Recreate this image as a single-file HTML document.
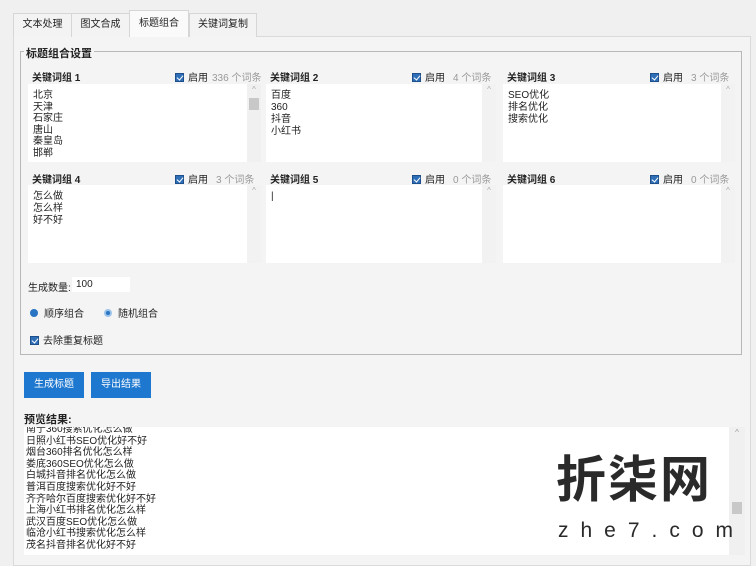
<!DOCTYPE html>
<html><head><meta charset="utf-8"><style>
*{margin:0;padding:0;box-sizing:border-box}
body{width:756px;height:558px;background:#f0f0f0;font-family:"Liberation Sans","Noto Sans CJK SC",sans-serif;font-size:10px;color:#222;position:relative;overflow:hidden}
.a{position:absolute}
.tab{position:absolute;top:13px;height:24px;border:1px solid #d6d6d6;border-bottom:none;background:#f3f3f3;line-height:22px;text-align:center;font-size:10px}
.panel{position:absolute;left:13px;top:36px;width:738px;height:530px;border:1px solid #dadada;background:#f4f4f4}
.grp{position:absolute;left:20px;top:51px;width:722px;height:304px;border:1px solid #b8b8b8}
.lbl{position:absolute;font-weight:bold;font-size:10px}
.en{position:absolute;font-size:10px}
.cb{display:inline-block;width:9px;height:9px;background:#2f6fb8;border:1px solid #1d4f8a;vertical-align:-1px;margin-right:4px;position:relative}
.cb:after{content:"";position:absolute;left:2px;top:0px;width:3px;height:5px;border:solid #fff;border-width:0 1px 1px 0;transform:rotate(40deg)}
.cnt{color:#999;margin-left:8px}
.ta{position:absolute;background:#fff;font-size:10px;line-height:12px;padding:6px 5px}
.sb{position:absolute;top:0;right:0;width:14px;height:100%;background:#f2f2f2;color:#aaa;font-size:8px;text-align:center}
.btn{position:absolute;top:372px;height:26px;background:#1f78cf;color:#fff;line-height:26px;text-align:center;font-size:10px}
</style></head><body>
<div class="panel"></div>
<div class="tab" style="left:13px;width:59px">文本处理</div>
<div class="tab" style="left:71px;width:59px">图文合成</div>
<div class="tab" style="left:129px;top:10px;height:27px;width:60px;background:#fafafa;line-height:26px">标题组合</div>
<div class="tab" style="left:189px;width:68px">关键词复制</div>
<div class="grp"></div>
<div class="a" style="left:24px;top:45px;background:#f4f4f4;padding:0 2px;font-weight:bold;font-size:11px">标题组合设置</div>

<div class="lbl" style="left:32px;top:69px">关键词组 1</div>
<div class="en" style="left:175px;top:69px"><span class="cb"></span>启用<span class="cnt" style="margin-left:4px">336 个词条</span></div>
<div class="ta" style="left:28px;top:84px;width:233px;height:78px;line-height:11.5px">北京<br>天津<br>石家庄<br>唐山<br>秦皇岛<br>邯郸<div class="sb" style="background:#f0f0f0">^<div style="background:#c8c8c8;width:10px;height:12px;margin:2px auto"></div></div></div>

<div class="lbl" style="left:270px;top:69px">关键词组 2</div>
<div class="en" style="left:412px;top:69px"><span class="cb"></span>启用<span class="cnt">4 个词条</span></div>
<div class="ta" style="left:266px;top:84px;width:230px;height:78px">百度<br>360<br>抖音<br>小红书<div class="sb">^</div></div>

<div class="lbl" style="left:507px;top:69px">关键词组 3</div>
<div class="en" style="left:650px;top:69px"><span class="cb"></span>启用<span class="cnt">3 个词条</span></div>
<div class="ta" style="left:503px;top:84px;width:232px;height:78px">SEO优化<br>排名优化<br>搜索优化<div class="sb">^</div></div>

<div class="lbl" style="left:32px;top:171px">关键词组 4</div>
<div class="en" style="left:175px;top:171px"><span class="cb"></span>启用<span class="cnt">3 个词条</span></div>
<div class="ta" style="left:28px;top:185px;width:233px;height:78px">怎么做<br>怎么样<br>好不好<div class="sb">^</div></div>

<div class="lbl" style="left:270px;top:171px">关键词组 5</div>
<div class="en" style="left:412px;top:171px"><span class="cb"></span>启用<span class="cnt">0 个词条</span></div>
<div class="ta" style="left:266px;top:185px;width:230px;height:78px">|<div class="sb">^</div></div>

<div class="lbl" style="left:507px;top:171px">关键词组 6</div>
<div class="en" style="left:650px;top:171px"><span class="cb"></span>启用<span class="cnt">0 个词条</span></div>
<div class="ta" style="left:503px;top:185px;width:232px;height:78px"><div class="sb">^</div></div>

<div class="en" style="left:28px;top:279px">生成数量:</div>
<div class="a" style="left:72px;top:277px;width:58px;height:15px;background:#fff;padding:2px 4px;font-size:10px">100</div>
<div class="en" style="left:30px;top:305px"><span style="display:inline-block;width:8px;height:8px;border-radius:50%;background:#2a74c4;margin-right:6px"></span>顺序组合</div>
<div class="en" style="left:104px;top:305px"><span style="display:inline-block;width:8px;height:8px;border-radius:50%;background:#2a74c4;border:2px solid #9cc3ea;margin-right:6px"></span>随机组合</div>
<div class="en" style="left:30px;top:332px"><span class="cb"></span>去除重复标题</div>

<div class="btn" style="left:24px;width:60px">生成标题</div>
<div class="btn" style="left:91px;width:60px">导出结果</div>
<div class="lbl" style="left:24px;top:411px;font-size:11px">预览结果:</div>
<div class="a" style="left:24px;top:427px;width:721px;height:128px;background:#fff;overflow:hidden;font-size:10px;line-height:11.6px;padding-left:2px">
<div style="margin-top:-3px">南宁360搜索优化怎么做</div>
日照小红书SEO优化好不好<br>烟台360排名优化怎么样<br>娄底360SEO优化怎么做<br>白城抖音排名优化怎么做<br>普洱百度搜索优化好不好<br>齐齐哈尔百度搜索优化好不好<br>上海小红书排名优化怎么样<br>武汉百度SEO优化怎么做<br>临沧小红书搜索优化怎么样<br>茂名抖音排名优化好不好
<div class="a" style="right:0;top:0;width:16px;height:128px;background:#f0f0f0;color:#999;font-size:8px;text-align:center">^<div style="position:absolute;top:75px;left:3px;width:10px;height:12px;background:#c8c8c8"></div></div>
</div>
<div class="a" style="left:556px;top:452px;font-size:50px;font-weight:bold;color:#2a2a2a;letter-spacing:2px;line-height:56px">折柒网</div>
<div class="a" style="left:558px;top:519px;font-size:21px;color:#2a2a2a;letter-spacing:12px">zhe7.com</div>
</body></html>
